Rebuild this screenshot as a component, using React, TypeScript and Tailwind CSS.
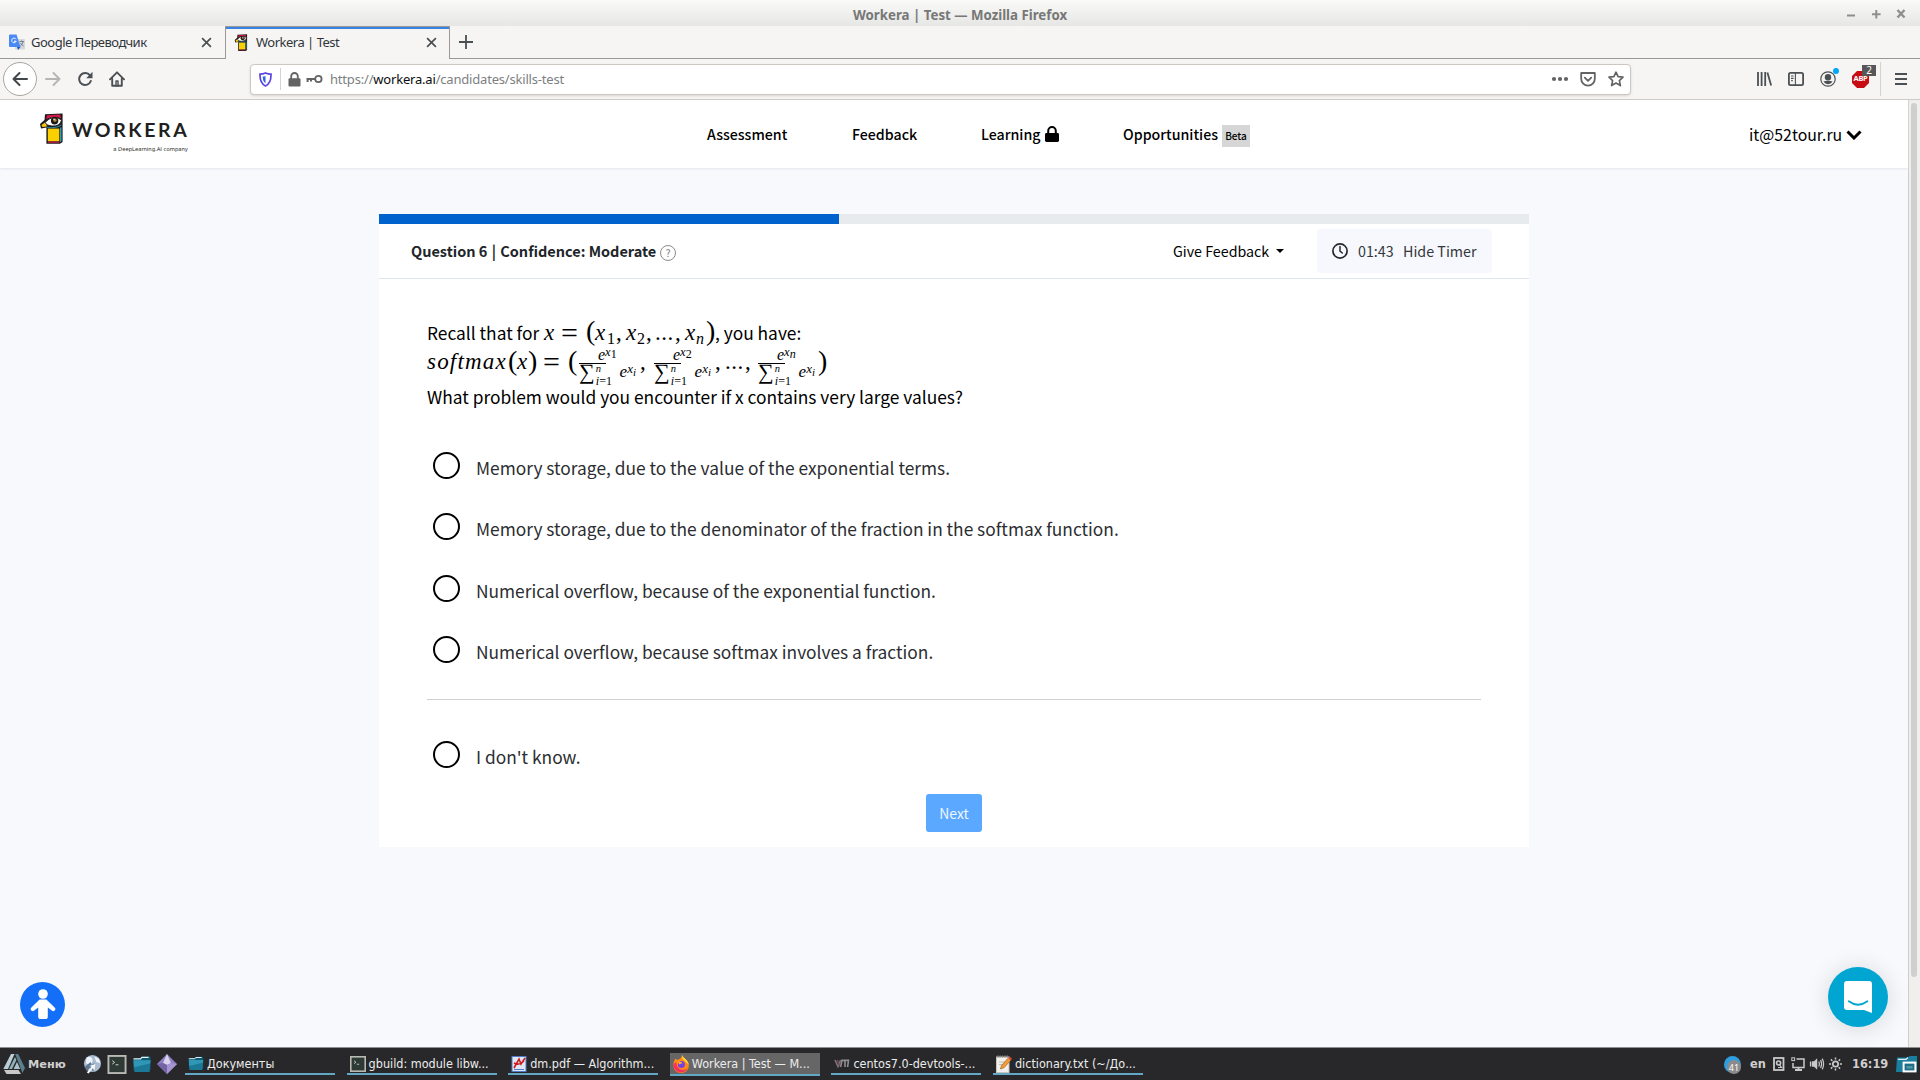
import type { ReactNode } from "react";

/* ---------- shared icons ---------- */

function WorkeraMark({ className }: { className: string }) {
  return (
    <svg viewBox="0 0 23 31" className={className}>
      <path d="M5 1.2 L22.6 0.4 V29 L20 30.8 H6.4 V14.6 L1 15.4 L0 11 L4.5 7Z" fill="#1d1a1c" />
      <path d="M7 2.2 L20 1.6 L21.3 5.5 C17 2.8 11 3.2 6.2 6.2Z" fill="#d8174b" />
      <path d="M1.5 12 L5.6 9 L7 13.5 L2.4 14Z" fill="#f9c80a" />
      <path d="M7.8 15.6 H19.3 V28.3 H7.8Z" fill="#fbd000" />
      <path d="M20 14.5 H21.5 V28 L20 29.2Z" fill="#2b9fb8" />
      <path d="M8 28.6 H19.3 V29.7 H8Z" fill="#d8174b" />
      <path d="M5 9.6 Q13 0.6 21.6 7 Q20 13.6 12 13 Q7 13 5 9.6Z" fill="#fff" stroke="#1d1a1c" strokeWidth="0.9" />
      <circle cx="14.6" cy="7.8" r="3.7" fill="#1d1a1c" />
      <circle cx="15" cy="7.2" r="1.6" fill="#b98b2c" />
      <circle cx="14" cy="6.2" r="0.7" fill="#fff" />
      <path d="M7 14.2 C11 15.2 17 14.8 21.4 12" stroke="#2b9fb8" strokeWidth="0.9" fill="none" />
    </svg>
  );
}

function CloseIcon() {
  return (
    <svg viewBox="0 0 10 10" className="size-[11px]">
      <path d="M1 1 L9 9 M9 1 L1 9" stroke="#4a4f52" strokeWidth="1.5" fill="none" />
    </svg>
  );
}

function FolderIcon({ className }: { className: string }) {
  return (
    <svg viewBox="0 0 20 18" className={className}>
      <path d="M1 3 L8 2 L9.5 0.5 H19 V15 H1Z" fill="#0d5a70" />
      <path d="M1 3 H8.5 L10 1.5 H17" stroke="#e8f4f8" strokeWidth="1.2" fill="none" />
      <path d="M1 4.5 H19 L18 17 H2Z" fill="#1b7896" />
      <path d="M1 4.5 H19 L18.6 8 L1.5 12Z" fill="#2f97b5" />
    </svg>
  );
}

function TerminalIcon({ className }: { className: string }) {
  return (
    <svg viewBox="0 0 20 20" className={className}>
      <rect x="1" y="1" width="18" height="18" fill="#2e3a36" stroke="#b9b9b4" strokeWidth="2" />
      <path d="M5 6 L7.5 7.8 L5 9.6 M8.5 10.3 H11.5" stroke="#d6d9d6" strokeWidth="1" fill="none" />
    </svg>
  );
}

/* ---------- window title and tabs ---------- */

function TitleBar() {
  return (
    <div className="flex h-[26px] items-center bg-gradient-to-b from-[#fafaf8] to-[#e6e6e4]">
      <div className="w-[853px] shrink-0" />
      <div className="mt-[3px] w-[960px] whitespace-nowrap text-[13.27px] leading-[20px] font-bold text-[#777]">
        Workera | Test — Mozilla Firefox
      </div>
      <svg viewBox="0 0 66 12" className="ml-[31px] mt-[2px] h-[12px] w-[66px]">
        <g stroke="#8e8e8c" strokeWidth="2" fill="none">
          <path d="M3 7.5 H11" />
          <path d="M28 6.2 H36.6 M32.3 2 V10.5" />
          <path d="M53.5 2 L60.5 9.5 M60.5 2 L53.5 9.5" strokeWidth="2.4" />
        </g>
      </svg>
    </div>
  );
}

function TabBar() {
  const text = "whitespace-nowrap text-[13px] leading-[20px] tracking-[-0.5px] text-[#30353a]";
  return (
    <div className="flex h-[33px] bg-[#f6f5f4]">
      <div className="flex h-full w-[225px] items-center border-b border-[#999896] pl-[9px]">
        <svg viewBox="0 0 16 16" className="size-4">
          <rect x="6" y="5" width="10" height="10.5" rx="1" fill="#d8d8d8" />
          <path d="M1 0.5 H7.5 L11.5 13 H1 Q0 13 0 12 V1.5 Q0 0.5 1 0.5Z" fill="#4a89f3" />
          <path d="M8 13 H11.5 L9 16Z" fill="#1c56c4" />
          <path d="M7 5.2 A2.3 2.3 0 1 0 7.2 7.2 H5" stroke="#fff" strokeWidth="1" fill="none" />
          <path d="M10.5 7.5 H15 M12.6 6.5 V7.5 M14.2 7.5 Q13.5 10.5 11.2 12 M11.5 9 Q12.5 11 14.6 12" stroke="#6b7a8c" strokeWidth="0.9" fill="none" />
        </svg>
        <span className={`ml-[6px] w-[170px] ${text}`}>Google Переводчик</span>
        <CloseIcon />
      </div>
      <div className="flex h-full w-[225px] items-center border-x border-t border-[#999896] pb-[2px] pl-[8px] shadow-[inset_0_2px_0_#3584e4]">
        <WorkeraMark className="h-[17px] w-[14px]" />
        <span className={`ml-[8px] w-[170px] ${text}`}>Workera | Test</span>
        <CloseIcon />
      </div>
      <div className="flex h-full grow items-center border-b border-[#999896] pl-[9px]">
        <svg viewBox="0 0 14 14" className="size-[14px]">
          <path d="M0 7 H14 M7 0 V14" stroke="#4a4f52" strokeWidth="1.8" />
        </svg>
      </div>
    </div>
  );
}

/* ---------- navigation toolbar ---------- */

function ToolBar() {
  return (
    <div className="flex h-[41px] items-center border-b border-[#cdc9c5] bg-[#f6f5f4]">
      <div className="ml-[3px] flex size-[34px] items-center justify-center rounded-full border border-[#a8a5a2] bg-white">
        <svg viewBox="0 0 16 16" className="size-4" fill="none" stroke="#41464a" strokeWidth="2" strokeLinecap="round" strokeLinejoin="round">
          <path d="M15 8 H1.5 M7.5 2 L1.5 8 L7.5 14" />
        </svg>
      </div>
      <svg viewBox="0 0 16 16" className="ml-2 size-4" fill="none" stroke="#b5b5b4" strokeWidth="2" strokeLinecap="round" strokeLinejoin="round">
        <path d="M1 8 H14.5 M8.5 2 L14.5 8 L8.5 14" />
      </svg>
      <svg viewBox="0 0 16 16" className="ml-4 size-4" fill="none" stroke="#4b5054" strokeWidth="2">
        <path d="M13 4.5 A6 6 0 1 0 13.8 10" strokeLinecap="round" />
        <path d="M15.5 0.8 V7.2 H9.2Z" fill="#4b5054" stroke="none" />
      </svg>
      <svg viewBox="0 0 16 16" className="ml-4 size-4" fill="none" stroke="#4b5054" strokeWidth="1.9" strokeLinejoin="round" strokeLinecap="round">
        <path d="M1 8.3 L8 1.3 L15 8.3" />
        <path d="M3.2 7.5 V14.8 H12.8 V7.5" />
        <path d="M7 15 V10 H9 V15" strokeWidth="1.4" />
      </svg>
      <div className="ml-[125px] flex h-[31px] w-[1381px] items-center rounded-[4px] border border-[#cdc7c2] bg-white shadow-sm">
        <svg viewBox="0 0 13 15" className="ml-[8px] h-[15px] w-[13px]">
          <path d="M6.5 1 C8.5 1.9 10 2.1 12 2.1 C12.2 8 10.8 12 6.5 14 C2.2 12 0.8 8 1 2.1 C3 2.1 4.5 1.9 6.5 1Z" fill="none" stroke="#5a45e0" strokeWidth="1.7" />
          <path d="M6.5 4 V11.2 C4.4 9.8 3.7 7.6 3.7 4.6 C5 4.6 5.6 4.4 6.5 4Z" fill="#2f66dd" />
        </svg>
        <div className="ml-[8px] h-[22px] w-px bg-[#d5d2cf]" />
        <svg viewBox="0 0 13 15" className="ml-[7px] h-[15px] w-[13px]">
          <path d="M3.2 7 V4.3 A3.3 3.3 0 0 1 9.8 4.3 V7" fill="none" stroke="#636363" strokeWidth="1.8" />
          <rect x="0.5" y="6.2" width="12" height="8.3" rx="1.2" fill="#636363" />
        </svg>
        <svg viewBox="0 0 17 10" className="ml-[5px] h-[10px] w-[17px]" fill="none" stroke="#636363">
          <circle cx="12.4" cy="5" r="3.2" strokeWidth="1.8" />
          <path d="M9 4.9 H0.5 M1.6 5 V8 M5 5 V7.6" strokeWidth="2" />
        </svg>
        <span className="ml-[7px] w-[1221px] whitespace-nowrap text-[13px] leading-[20px] tracking-[-0.19px] text-[#7d7f80]">
          https://<span className="text-[#0c0c0d]">workera.ai</span>/candidates/skills-test
        </span>
        <svg viewBox="0 0 18 6" className="h-[6px] w-[18px]" fill="#636363">
          <circle cx="3" cy="3" r="2.1" />
          <circle cx="9" cy="3" r="2.1" />
          <circle cx="15" cy="3" r="2.1" />
        </svg>
        <svg viewBox="0 0 16 15" className="ml-[11px] h-[15px] w-[16px]" fill="none" stroke="#636363" strokeWidth="1.8" strokeLinejoin="round" strokeLinecap="round">
          <path d="M1.2 1 H14.8 V7 A6.8 6.6 0 0 1 1.2 7Z" />
          <path d="M4.8 5.6 L8 8.8 L11.2 5.6" />
        </svg>
        <svg viewBox="0 0 16 16" className="ml-[12px] size-4" fill="none" stroke="#636363" strokeWidth="1.7" strokeLinejoin="round">
          <path d="M8 1.2 L10.1 5.7 L15 6.2 L11.4 9.6 L12.4 14.6 L8 12.1 L3.6 14.6 L4.6 9.6 L1 6.2 L5.9 5.7Z" />
        </svg>
      </div>
      <svg viewBox="0 0 15 14" className="ml-[126px] h-[14px] w-[15px]" stroke="#4b5054" strokeWidth="1.8" fill="none">
        <path d="M1 0 V14 M4.6 0 V14 M8.2 0 V14 M10.4 0.4 L14.2 13.6" />
      </svg>
      <svg viewBox="0 0 16 14" className="ml-[16px] h-[14px] w-4" stroke="#4b5054" fill="none">
        <rect x="0.9" y="0.9" width="14.2" height="12.2" rx="1.6" strokeWidth="1.8" />
        <path d="M7.4 1 V13 M3 4 H5.6 M3 6.4 H5.6 M3 8.8 H5" strokeWidth="1.1" />
      </svg>
      <svg viewBox="0 0 20 20" className="mb-[2px] ml-[16px] size-[20px]">
        <circle cx="8" cy="11" r="7.2" fill="none" stroke="#4b5054" strokeWidth="1.2" />
        <circle cx="8" cy="9.2" r="3.2" fill="#4b5054" />
        <path d="M3.4 13.6 Q8 11.8 12.6 13.6 Q11 16.2 8 16.2 Q5 16.2 3.4 13.6Z" fill="#4b5054" />
        <circle cx="16" cy="2.9" r="3" fill="#00a8f8" />
      </svg>
      <div className="relative ml-[12px] flex size-[17px] items-center justify-center">
        <svg viewBox="0 0 16 16" className="absolute inset-0 size-full">
          <path d="M4.7 0 H11.3 L16 4.7 V11.3 L11.3 16 H4.7 L0 11.3 V4.7Z" fill="#c70d12" />
        </svg>
        <span className="relative text-[7.5px] leading-none font-bold tracking-[-0.3px] text-white">ABP</span>
        <span className="absolute -top-[6px] left-[10px] flex h-[11px] w-[14px] items-center justify-center bg-[#57575a] text-[10px] leading-none text-white">
          2
        </span>
      </div>
      <div className="ml-[11px] h-[34px] w-px bg-[#d5d3d0]" />
      <svg viewBox="0 0 12 12" className="ml-[14px] size-3" stroke="#4b5054" strokeWidth="2">
        <path d="M0 1 H12 M0 6 H12 M0 11 H12" />
      </svg>
    </div>
  );
}

/* ---------- site header ---------- */

function SiteHeader() {
  const link = "whitespace-nowrap text-[14.2px] leading-[22px] font-medium text-black";
  return (
    <header className="flex h-[68px] shrink-0 items-start bg-white shadow-[0_1px_2px_#e4e4ec]">
      <WorkeraMark className="mt-[13px] ml-[40px] h-[31px] w-[23px]" />
      <div className="mt-[18px] ml-[9px] w-[116px] font-['Lato',sans-serif] font-bold text-[#221f20]">
        <div className="text-[19.5px] leading-[24px] tracking-[2.6px] whitespace-nowrap">WORKERA</div>
        <div className="mt-[3px] text-right font-['DejaVu_Sans',sans-serif] text-[5.3px] leading-[9px] font-normal whitespace-nowrap">a DeepLearning.AI company</div>
      </div>
      <nav className="ml-[519px] flex h-full w-[1042px] font-['Noto_Sans_CJK_SC',sans-serif]">
        <span className={`mt-[23px] w-[145px] ${link}`}>Assessment</span>
        <span className={`mt-[23px] w-[129px] ${link}`}>Feedback</span>
        <span className={`mt-[23px] w-[64px] ${link}`}>Learning</span>
        <svg viewBox="0 0 14 16" className="mt-[26px] h-[16px] w-[14px]">
          <path d="M3.2 8 V5 A3.8 3.9 0 0 1 10.8 5 V8" fill="none" stroke="#000" strokeWidth="2" />
          <rect x="0" y="7" width="14" height="9" rx="1.4" />
        </svg>
        <span className={`mt-[23px] ml-[64px] w-[99px] ${link}`}>Opportunities</span>
        <span className="mt-[25px] flex h-[22px] w-[28px] items-center justify-center bg-[#d6d6d6] pb-px text-[10px] font-medium text-black">Beta</span>
      </nav>
      <div className="mt-[23px] flex font-['Noto_Sans_CJK_SC',sans-serif]">
        <span className="w-[97px] text-[15.85px] leading-[24px] text-black">it@52tour.ru</span>
        <svg viewBox="0 0 16 10" className="mt-[7px] h-[10px] w-4">
          <path d="M1.5 1.5 L8 8 L14.5 1.5" fill="none" stroke="#000" strokeWidth="3" />
        </svg>
      </div>
    </header>
  );
}

/* ---------- formulas ---------- */

function M({ className, children }: { className: string; children: ReactNode }) {
  return <span className={`inline-block leading-[0] ${className}`}>{children}</span>;
}

function Fraction({ index }: { index: string }) {
  return (
    <span className="flex w-[57px] shrink-0 flex-col">
      <span className="h-[15px] shrink-0 pl-[19px] text-[16px] leading-[13px] italic">
        e<span className="align-[4px] text-[12.5px] leading-[0]">x</span>
        <span className="align-[2px] text-[12px] leading-[0] not-italic">{index === "n" ? <i>n</i> : index}</span>
      </span>
      <span className="h-px w-[27px] shrink-0 bg-black" />
      <span className="flex shrink-0">
        <span className="w-[17px] text-[22px] leading-[16px]">∑</span>
        <span className="flex w-[24px] flex-col text-[12px]">
          <i className="text-[10.5px] leading-[9px]">n</i>
          <span className="leading-[16px]"><i>i</i>=1</span>
        </span>
        <span className="text-[17px] leading-[15px] whitespace-nowrap italic">
          e<span className="align-[4px] text-[13px] leading-[0]">x</span>
          <span className="align-[1px] text-[11px] leading-[0]">i</span>
        </span>
      </span>
    </span>
  );
}

function Question() {
  return (
    <div className="text-[17.35px] leading-[30px] text-black">
      <p className="h-[30px] whitespace-nowrap">
        <span className="inline-block w-[117px]">Recall that for</span>
        <span className="font-['Liberation_Serif',serif] text-[23px] leading-[0]">
          <M className="w-[17px] italic">x</M>
          <M className="w-[25px] align-[-3px] text-[30px]">=</M>
          <M className="w-[9px] text-[28px]">(</M>
          <M className="w-[12px] italic">x</M>
          <M className="w-[9px] align-[-4px] text-[16px]">1</M>
          <M className="w-[10px]">,</M>
          <M className="w-[11px] italic">x</M>
          <M className="w-[9px] align-[-4px] text-[16px]">2</M>
          <M className="w-[9px]">,</M>
          <M className="w-[20px] tracking-[0.5px]">...</M>
          <M className="w-[10px]">,</M>
          <M className="w-[11px] italic">x</M>
          <M className="w-[10px] align-[-4px] text-[16px] italic">n</M>
          <M className="w-[9px] text-[28px]">)</M>
        </span>
        , you have:
      </p>
      <p className="flex h-[35px] font-['Liberation_Serif',serif] text-[23px] leading-[28px] whitespace-nowrap">
        <i className="w-[81px] tracking-[1.2px]">softmax</i>
        <span className="w-[9px] text-[28px] leading-[25px]">(</span>
        <i className="w-[11px]">x</i>
        <span className="w-[15px] text-[28px] leading-[25px]">)</span>
        <span className="w-[25px] text-[30px] leading-[28px]">=</span>
        <span className="w-[11px] text-[28px] leading-[25px]">(</span>
        <Fraction index="1" />
        <span className="w-[18px] pl-[4px]">,</span>
        <Fraction index="2" />
        <span className="w-[14px] pl-[4px]">,</span>
        <span className="w-[20px] tracking-[0.5px]">...</span>
        <span className="w-[13px]">,</span>
        <Fraction index="n" />
        <span className="pl-[3px] text-[28px] leading-[25px]">)</span>
      </p>
      <p className="-mt-px">What problem would you encounter if x contains very large values?</p>
    </div>
  );
}

/* ---------- question card ---------- */

const options = [
  "Memory storage, due to the value of the exponential terms.",
  "Memory storage, due to the denominator of the fraction in the softmax function.",
  "Numerical overflow, because of the exponential function.",
  "Numerical overflow, because softmax involves a fraction.",
];

function Option({ label }: { label: string }) {
  return (
    <label className="flex h-[61.33px] pl-[6px] text-[17.33px] leading-[32px] text-[#2b2d31]">
      <span className="size-[27px] shrink-0 rounded-full border-2 border-black" />
      <span className="ml-[16px] whitespace-nowrap">{label}</span>
    </label>
  );
}

function Card() {
  return (
    <section className="mt-[46px] ml-[379px] flex h-[633px] w-[1150px] flex-col bg-white font-['Noto_Sans_CJK_SC',sans-serif]">
      <div className="h-[10px] bg-[#e7ebee]">
        <div className="h-full w-2/5 bg-[#0062cc]" />
      </div>
      <div className="flex h-[55px] items-start border-b border-[#dfe6f0] pl-[32px]">
        <span className="mt-[16px] w-[249px] text-[14.5px] leading-[22px] font-bold whitespace-nowrap text-[#212529]">
          Question 6<span className="mx-px"> | </span>Confidence: Moderate
        </span>
        <span className="mt-[21px] flex size-4 items-center justify-center rounded-full border border-[#8c8c8c] text-[10px] leading-none text-[#777]">?</span>
        <span className="mt-[16px] ml-[497px] w-[103px] text-[14.25px] leading-[22px] whitespace-nowrap text-black">Give Feedback</span>
        <span className="mt-[25px] border-x-[4.5px] border-t-[4.5px] border-x-transparent border-t-black" />
        <span className="mt-[5px] ml-[33px] flex h-[44px] w-[175px] rounded-[4px] bg-[#f7f8fd] pt-[11px] pl-[15px] text-[14.3px] leading-[22px] text-[#33373b]">
          <svg viewBox="0 0 16 16" className="mt-[3px] size-4" fill="none" stroke="#26292c" strokeLinecap="round">
            <circle cx="8" cy="8" r="7.1" strokeWidth="1.7" />
            <path d="M8 3.6 V8.2 L10.3 10" strokeWidth="1.5" />
          </svg>
          <span className="ml-[10px] w-[45px]">01:43</span>
          <span className="whitespace-nowrap">Hide Timer</span>
        </span>
      </div>
      <div className="flex flex-col px-[48px] pt-[39px]">
        <Question />
        <div className="mt-[40px]">
          {options.map((label) => (
            <Option key={label} label={label} />
          ))}
        </div>
        <hr className="mt-[2px] mb-[41px] border-[#d0d0d0]" />
        <Option label="I don't know." />
        <button className="mt-[-9px] h-[38px] w-[56px] self-center rounded-[3px] bg-[#5aa8ff] pt-[2px] text-[13.9px] text-[#eef6ff]">Next</button>
      </div>
    </section>
  );
}

/* ---------- desktop panel ---------- */

const pdfIcon = (
  <svg viewBox="0 0 16 16" className="size-4">
    <rect x="1" y="0.5" width="14" height="15" fill="#dfe7f5" stroke="#4f79c4" />
    <path d="M3 12 L8 3 L10 8 L14 2 M3 7 Q8 10 13 5" stroke="#cf1d1d" strokeWidth="1.6" fill="none" />
    <path d="M3 13.5 H13" stroke="#4f79c4" />
  </svg>
);

const firefoxIcon = (
  <svg viewBox="0 0 16 18" className="h-[18px] w-4">
    <path d="M9 0 C10 3 15.8 5 15.8 11 A7.6 7 0 0 1 0.4 11 C0.2 7 1.6 4.6 2.8 3.4 L4.2 5 C6 4 8.4 3.6 9 0Z" fill="#ff8a16" />
    <path d="M9 0 C10 3 15.8 5 15.8 10 C14 7 11 6 9.6 4Z" fill="#ffd83a" />
    <path d="M0.5 9 A7.6 7.4 0 0 0 15 13 C11 17 3 15 3.4 7Z" fill="#f5315e" />
    <circle cx="8.4" cy="9.6" r="3.5" fill="#7a3fe0" />
    <path d="M4.6 6.6 C7 6 9 7 9.4 8.6 C8 8.6 7.4 9 6.4 9.4Z" fill="#ffb02a" />
  </svg>
);

const vmIcon = (
  <svg viewBox="0 0 16 9" className="h-[9px] w-4" fill="none" strokeWidth="1.6">
    <path d="M1 1 L4 7.6 L6.6 1" stroke="#77777c" />
    <path d="M6.5 8 L8 1.4 H14.5 L13.6 8 M11 2 V8" stroke="#8f8f94" />
    <path d="M3.2 1 L5.6 7" stroke="#7c4a50" />
  </svg>
);

const noteIcon = (
  <svg viewBox="0 0 16 18" className="h-[18px] w-4">
    <rect x="0.5" y="2" width="12.5" height="15.5" fill="#f1f0ec" stroke="#c5c4bd" />
    <path d="M1 1.6 H13" stroke="#888" strokeDasharray="1.4 1" strokeWidth="2" />
    <path d="M3 7 H9 M3 9.5 H7" stroke="#bbb" />
    <path d="M4.4 14 L5.4 10.6 L12.4 2.8 L15 5 L8 12.8Z" fill="#f29a38" stroke="#94611b" strokeWidth="0.6" />
    <path d="M12.4 2.8 L13.6 1.4 L16 3.6 L15 5Z" fill="#d9443f" />
  </svg>
);

const tasks: { label: string; icon: ReactNode; active?: boolean }[] = [
  { label: "Документы", icon: <FolderIcon className="h-[15px] w-4" /> },
  { label: "gbuild: module libw...", icon: <TerminalIcon className="size-4" /> },
  { label: "dm.pdf — Algorithm...", icon: pdfIcon },
  { label: "Workera | Test — M...", icon: firefoxIcon, active: true },
  { label: "centos7.0-devtools-...", icon: vmIcon },
  { label: "dictionary.txt (~/До...", icon: noteIcon },
];

function Panel() {
  return (
    <footer className="flex h-[33px] shrink-0 items-start border-t border-[#8f8f8f] bg-[#28282a] font-['DejaVu_Sans',sans-serif]">
      <svg viewBox="0 0 22 20" className="mt-[6px] ml-[3px] h-5 w-[22px]">
        <path d="M8 0 L11.5 0 L5 15 H0.3Z" fill="#b9cfd6" />
        <path d="M12.2 0 L15.2 0 L22 14 L19.4 19Z" fill="#5b7f8c" />
        <path d="M12 3 L13.4 6 L9 15 H6Z" fill="#8fb0bb" />
        <path d="M1 16 H15.5 L18 20 H3.5Z" fill="#c9c9c9" />
        <path d="M14 8 L17.2 15 H10.6Z" fill="#a9c2ca" />
      </svg>
      <span className="mt-[9px] ml-[3px] w-[55px] text-[11.3px] leading-[16px] font-bold text-[#cfcfcf]">Меню</span>
      <div className="mt-[6px] flex w-[102px] items-center gap-[5px]">
        <svg viewBox="0 0 20 20" className="h-5 w-[19px]">
          <circle cx="10" cy="9.5" r="9" fill="#a9bccf" />
          <path d="M4 3 Q9 1 10 5 T7 10 T3 8Z M12 2 Q18 4 18 9 L14 8Z" fill="#eef4fa" />
          <path d="M2 13 L8 8 L9 11 L12 9 L11 18 L7 14 L4 18Z" fill="#5c7893" />
          <path d="M4 19 L9 13 L6.5 12 L13 10 L12 17 L10.4 14.6 L6 20Z" fill="#f4f6f8" />
        </svg>
        <TerminalIcon className="h-[19px] w-5" />
        <FolderIcon className="h-[17px] w-5" />
        <svg viewBox="0 0 20 20" className="size-5">
          <path d="M10 0 L20 10 L10 20 L0 10Z" fill="#8f7fc0" />
          <path d="M10 0 L14 9 L10 11 L6 9Z" fill="#d9d2ee" />
          <path d="M0 10 L6 9 L10 11 V20Z" fill="#7464a6" />
          <path d="M20 10 L14 9 L10 11 V20Z" fill="#a594cf" />
        </svg>
      </div>
      <div className="flex w-[1539px] gap-[11.6px]">
        {tasks.map((t) => (
          <div
            key={t.label}
            className={
              t.active
                ? "mt-[5px] flex h-[23px] w-[150px] items-center border-b-2 border-[#62a8c4] bg-[#666667] pt-px pl-[3px]"
                : "mt-[5px] flex h-[22px] w-[150px] items-center border-b-2 border-[#62a8c4] pt-px pl-[3px]"
            }
          >
            {t.icon}
            <span className="ml-[3px] font-['DejaVu_Sans_Condensed','DejaVu_Sans',sans-serif] text-[12.5px] leading-[16px] whitespace-nowrap text-[#ececec]">
              {t.label}
            </span>
          </div>
        ))}
      </div>
      <div className="flex items-start text-[11.4px] leading-[16px] font-bold text-[#cfcfcf]">
        <span className="relative mt-[8px] size-[17px] rounded-full bg-[#2d9fe0]">
          <span className="absolute top-[4px] left-[3px] flex size-[14px] items-center justify-center rounded-full bg-[#8b8b8b] font-['Noto_Sans',sans-serif] text-[9px] leading-none font-normal text-white">
            41
          </span>
        </span>
        <span className="mt-[8px] ml-[9px] w-[23px]">en</span>
        <svg viewBox="0 0 72 16" className="mt-[8px] h-4 w-[72px]" fill="none" stroke="#c9c9c9">
          <rect x="1" y="2" width="9.5" height="12" strokeWidth="1.8" />
          <circle cx="5.6" cy="7" r="2" strokeWidth="1.6" />
          <path d="M6 8 L8.5 11.5 H5" strokeWidth="1.2" />
          <path d="M23.5 3 H31 V11.5 H20 V7" strokeWidth="1.5" />
          <rect x="18.8" y="1.8" width="2.8" height="2.8" strokeWidth="1" />
          <path d="M25.5 12 V14 M22 14 H29" strokeWidth="1.8" />
          <path d="M37.5 5.5 V10.5" strokeWidth="1.2" />
          <path d="M39 5.6 H41 L44 2.8 V13.2 L41 10.4 H39Z" fill="#c9c9c9" strokeWidth="0.5" />
          <path d="M45.8 5.5 Q47 8 45.8 10.5 M47.6 4 Q49.6 8 47.6 12 M49.2 2.6 Q52 8 49.2 13.4" strokeWidth="1.2" />
          <circle cx="62.5" cy="8" r="2.7" strokeWidth="1.7" />
          <path d="M62.5 1.5 V3.6 M62.5 12.4 V14.5 M56 8 H58.1 M66.9 8 H69 M57.9 3.4 L59.3 4.8 M65.7 11.2 L67.1 12.6 M67.1 3.4 L65.7 4.8 M59.3 11.2 L57.9 12.6" strokeWidth="1.5" />
        </svg>
        <span className="mt-[8px] ml-[7px] w-[44px]">16:19</span>
        <svg viewBox="0 0 22 17" className="mt-[8px] h-[17px] w-[22px]">
          <path d="M1 1.5 H12 L13.5 0 H21 V16 H0Z" fill="#1a7f9e" />
          <path d="M2 3.4 H10 L12 1.5" stroke="#dff0f6" strokeWidth="1.3" fill="none" />
          <rect x="7.6" y="6.6" width="11.8" height="8.8" fill="#1d6f88" stroke="#fff" strokeWidth="2" />
          <path d="M10.5 10 H16.5 V12.6 H10.5Z" fill="#fff" opacity="0.25" />
        </svg>
      </div>
    </footer>
  );
}

/* ---------- page ---------- */

export default function App() {
  return (
    <div className="flex h-[1080px] w-[1920px] flex-col overflow-hidden font-['Noto_Sans',sans-serif]">
      <TitleBar />
      <TabBar />
      <ToolBar />
      <div className="flex h-[947px] shrink-0">
        <main className="relative flex w-[1908px] flex-col bg-[#f8f9fd]">
          <SiteHeader />
          <Card />
          <div className="absolute bottom-[20px] left-[20px] flex size-[45px] items-center justify-center rounded-full bg-[#146ff8]">
            <svg viewBox="0 0 26 31" className="h-[31px] w-[26px]" fill="#fff">
              <circle cx="13" cy="5" r="4.8" />
              <path d="M9.6 10.5 H16.4 L24.6 18.6 A1.9 1.9 0 0 1 21.8 21.6 L17.8 18.6 V27.4 Q17.8 30 15.4 30 H10.6 Q8.2 30 8.2 27.4 V18.6 L4.2 21.6 A1.9 1.9 0 0 1 1.4 18.6Z" />
            </svg>
          </div>
          <div className="absolute right-[20px] bottom-[20px] flex size-[60px] items-center justify-center rounded-full bg-[#00a5d1] shadow-[0_2px_24px_rgba(0,0,0,0.14)]">
            <svg viewBox="0 0 28 32" className="h-8 w-7">
              <path d="M3 0 H25 Q28 0 28 3 V32 L20 29 H3 Q0 29 0 26 V3 Q0 0 3 0Z" fill="#fff" />
              <path d="M4.8 20.3 Q14 27.2 23.4 20.3" fill="none" stroke="#00a5d1" strokeWidth="1.8" strokeLinecap="round" />
            </svg>
          </div>
        </main>
        <div className="w-[12px] border-l border-[#cfcdca] bg-[#f0efed] pt-[3px] pl-[2px]">
          <div className="h-[874px] w-[6px] rounded-full bg-[#cfcfcf]" />
        </div>
      </div>
      <Panel />
    </div>
  );
}
